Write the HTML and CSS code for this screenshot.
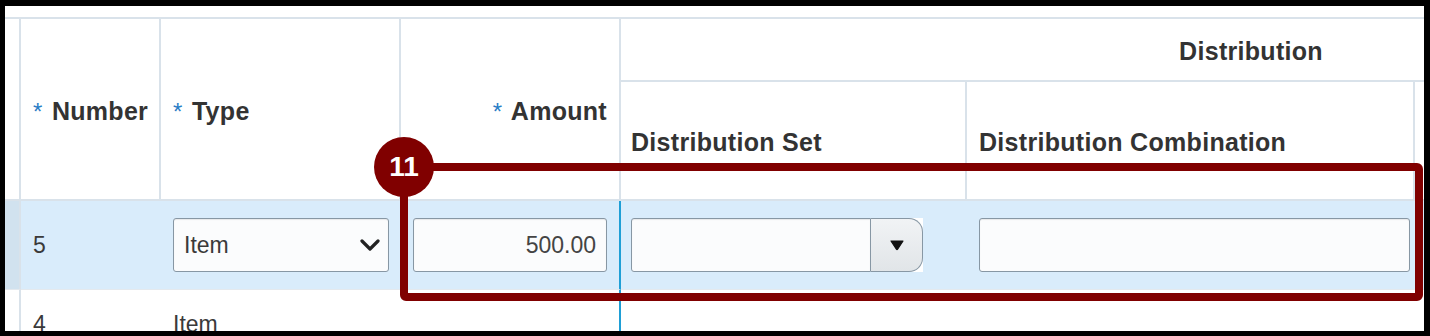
FILE: index.html
```html
<!DOCTYPE html>
<html lang="en">
<head>
    <meta charset="UTF-8">
    <meta name="viewport" content="width=device-width, initial-scale=1.0">
    <title>Invoice Lines - Distribution</title>
    <link rel="stylesheet" href="styles.css">
</head>
<body>
    <div class="frame">
        <table class="grid">
            <colgroup>
                <col class="c-stub">
                <col class="c-number">
                <col class="c-type">
                <col class="c-amount">
                <col class="c-set">
                <col class="c-combination">
                <col class="c-more">
            </colgroup>
            <thead>
                <tr class="head-top">
                    <th rowspan="2" class="stub"></th>
                    <th rowspan="2"><span class="req">*</span> Number</th>
                    <th rowspan="2"><span class="req">*</span> Type</th>
                    <th rowspan="2" class="right"><span class="req">*</span> Amount</th>
                    <th colspan="3" class="group">Distribution</th>
                </tr>
                <tr class="head-sub">
                    <th class="set-head">Distribution Set</th>
                    <th>Distribution Combination</th>
                    <th class="no-line"></th>
                </tr>
            </thead>
            <tbody>
                <tr class="row selected">
                    <td class="stub"></td>
                    <td>5</td>
                    <td>
                        <div class="field select-field">
                            <span>Item</span>
                            <svg width="20" height="14" viewBox="0 0 20 14">
                                <path d="M2 3 L10 11 L18 3" fill="none" stroke="#222" stroke-width="3.2" stroke-linecap="round" stroke-linejoin="round"/>
                            </svg>
                        </div>
                    </td>
                    <td class="frozen">
                        <div class="field amount-field">500.00</div>
                    </td>
                    <td class="set-cell">
                        <div class="combo">
                            <div class="field combo-input"></div>
                            <span class="btn-bg">
                                <span class="combo-btn">
                                    <svg width="16" height="12" viewBox="0 0 16 12">
                                        <path d="M2 2 L14 2 L8.6 10.2 Q8 11 7.4 10.2 Z" fill="#111" stroke="#111" stroke-width="1.2" stroke-linejoin="round"/>
                                    </svg>
                                </span>
                            </span>
                        </div>
                    </td>
                    <td>
                        <div class="field combination-field"></div>
                    </td>
                    <td></td>
                </tr>
                <tr class="row plain">
                    <td class="stub"></td>
                    <td>4</td>
                    <td>Item</td>
                    <td class="frozen"></td>
                    <td></td>
                    <td></td>
                    <td></td>
                </tr>
            </tbody>
        </table>

        <!-- step callout -->
        <div class="callout"></div>
        <div class="badge">11</div>
    </div>
</body>
</html>
```

FILE: styles.css
```css
body {
    margin: 0;
    background-color: #000;
    font-family: 'Liberation Sans', Arial, sans-serif;
    color: #333;
}
.frame {
    position: relative;
    margin: 6px 6px 0 5px;
    height: 325px;
    padding-top: 11px;
    box-sizing: border-box;
    background-color: #fff;
    overflow: hidden;
}
.grid {
    width: 1878px;
    table-layout: fixed;
    border-collapse: separate;
    border-spacing: 0;
    border-top: 2px solid #d9e2ea;
}
.c-stub { width: 16px; }
.c-number { width: 140px; }
.c-type { width: 240px; }
.c-amount { width: 220px; }
.c-set { width: 346px; }
.c-combination { width: 448px; }
.c-more { width: 468px; }

th {
    padding: 4px 12px 0;
    font-size: 25px;
    font-weight: bold;
    letter-spacing: 0.3px;
    color: #333;
    text-align: left;
    vertical-align: middle;
    white-space: nowrap;
    border-right: 2px solid #d9e2ea;
    border-bottom: 2px solid #d9e2ea;
}
th.stub { padding: 0; }
th.right { text-align: right; }
th.group { text-align: center; }
th.set-head { padding-left: 10px; }
th.no-line { border-right: none; }
.head-top { height: 63px; }
.head-sub { height: 119px; }
.req {
    color: #2a7dc6;
    font-weight: normal;
    font-size: 24px;
    margin-right: 2px;
}

td {
    padding: 0 12px;
    font-size: 23px;
    color: #3a3a3a;
    vertical-align: middle;
    white-space: nowrap;
    border-bottom: 1px solid #e4e9ee;
}
td.stub {
    padding: 0;
    border-right: 2px solid #d9e2ea;
}
td.frozen { border-right: 2px solid #1f9fd6; }
td.set-cell { padding-left: 10px; }
.row.selected { height: 89px; }
.row.selected td { background-color: #d9ecfb; }
.row.selected td.stub { background-color: #d1e2ef; }
.row.plain { height: 70px; }

.field {
    display: flex;
    align-items: center;
    height: 54px;
    box-sizing: border-box;
    border: 1px solid #8797a4;
    border-radius: 3px;
    background-color: #fbfcfd;
    box-shadow: inset 0 1px 1px rgba(0, 0, 0, 0.08);
    font-size: 23px;
    color: #3a3a3a;
}
.select-field {
    width: 216px;
    padding: 0 8px 0 10px;
    justify-content: space-between;
}
.amount-field {
    width: 194px;
    padding-right: 10px;
    justify-content: flex-end;
    color: #444;
}
.combo {
    display: flex;
}
.combo-input {
    width: 240px;
    border-radius: 3px 0 0 3px;
}
.btn-bg {
    display: flex;
    background-color: #fff;
}
.combo-btn {
    display: flex;
    align-items: center;
    justify-content: center;
    width: 52px;
    height: 54px;
    box-sizing: border-box;
    border: 1px solid #8797a4;
    border-left: none;
    border-radius: 0 14px 14px 0;
    background: linear-gradient(#f1f3f5, #e1e5e8);
}
.combination-field {
    width: 431px;
}

/* Callout overlay */
.callout {
    position: absolute;
    left: 395px;
    top: 157px;
    width: 1023px;
    height: 138px;
    box-sizing: border-box;
    border: 8px solid #800000;
    border-radius: 6px;
}
.badge {
    position: absolute;
    left: 369px;
    top: 131px;
    width: 60px;
    height: 60px;
    border-radius: 50%;
    background-color: #800000;
    color: #fff;
    font-size: 28px;
    font-weight: bold;
    display: flex;
    align-items: center;
    justify-content: center;
}
```
